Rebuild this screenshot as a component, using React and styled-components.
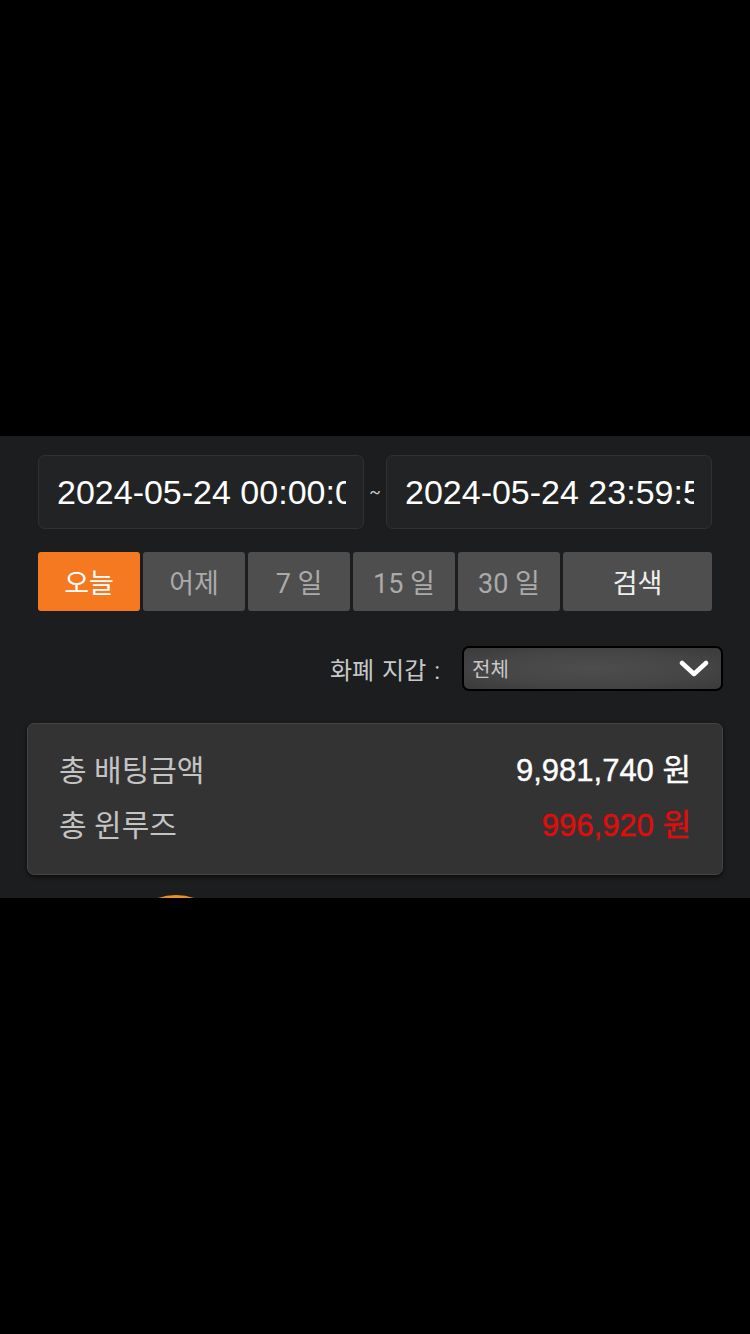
import React from 'react';
import styled, {createGlobalStyle} from 'styled-components';

const GlobalStyle = createGlobalStyle`
  html, body {
    margin: 0;
    padding: 0;
    background: #000;
  }
  body {
    font-family: Roboto, "Noto Sans CJK KR", sans-serif;
  }
`

const Page = styled.div`
  width: 750px;
  min-height: 1334px;
  background: #000;
  padding-top: 436px;
  box-sizing: border-box;
`
const Panel = styled.section`
  height: 462px;
  background: #1b1d1f;
  padding: 19px 27px 0;
  box-sizing: border-box;
  overflow: hidden;
`
const DateRow = styled.div`
  display: flex;
  align-items: center;
  margin: 0 11px;
`
const DateInput = styled.input`
  width: 326px;
  height: 74px;
  box-sizing: border-box;
  background: #222324;
  border: 1px solid #303132;
  border-radius: 7px;
  color: #fff;
  font-family: "Liberation Sans", "Noto Sans CJK KR", sans-serif;
  font-size: 34px;
  padding: 0 17px 0 18px;
  outline: none;
`
const Tilde = styled.span`
  width: 22px;
  text-align: center;
  color: #ccc;
  font-size: 17px;
`
const ButtonRow = styled.div`
  display: flex;
  gap: 3px;
  margin: 23px 11px 0;
`
const RangeButton = styled.button`
  width: ${p => (p.$wide ? '149px' : '102px')};
  height: 59px;
  border: none;
  border-radius: 3px;
  background: ${p => (p.$active ? '#f47920' : '#4e4e4f')};
  color: ${p => (p.$active ? '#fff' : p.$wide ? '#eee' : '#aaa')};
  font-family: Roboto, "Noto Sans CJK KR", sans-serif;
  font-size: 27px;
  padding: 0;
`
const WalletRow = styled.div`
  display: flex;
  justify-content: flex-end;
  align-items: center;
  margin-top: 35px;
  gap: 22px;
`
const WalletLabel = styled.span`
  color: #c8c8c8;
  font-size: 24px;
  word-spacing: 2px;
`
const Select = styled.div`
  width: 261px;
  height: 45px;
  box-sizing: border-box;
  border: 2px solid #000;
  border-radius: 7px;
  background: radial-gradient(ellipse at center, #4d4d4d 0%, #454545 60%, #3a3a3a 100%);
  display: flex;
  align-items: center;
  justify-content: space-between;
  padding: 0 12px 0 8px;
`
const SelectText = styled.span`
  color: #c8c8c8;
  font-size: 20px;
`
const Card = styled.div`
  margin-top: 32px;
  height: 152px;
  box-sizing: border-box;
  background: #333334;
  border: 1px solid #444;
  border-radius: 7px;
  box-shadow: 0 2px 4px rgba(0, 0, 0, 0.6);
  padding: 16px 31px 0;
`
const SumRow = styled.div`
  display: flex;
  justify-content: space-between;
  align-items: center;
  height: 55px;
`
const SumLabel = styled.span`
  color: #c4c4c4;
  font-size: 30px;
`
const SumValue = styled.span`
  color: ${p => p.$color || '#fff'};
  font-family: "Liberation Sans", "Noto Sans CJK KR", sans-serif;
  font-size: 31px;
  font-weight: 400;
  -webkit-text-stroke: 0.4px ${p => p.$color || '#fff'};
`
const Spinner = styled.div`
  width: 110px;
  height: 110px;
  border-radius: 50%;
  background: #ee8f2a;
  margin: 20px 0 0 94px;
`

const ranges = ['오늘', '어제', '7 일', '15 일', '30 일'];

export default function App() {
  return (
    <Page>
      <GlobalStyle/>
      <Panel>
        <DateRow>
          <DateInput readOnly value="2024-05-24 00:00:00"/>
          <Tilde>~</Tilde>
          <DateInput readOnly value="2024-05-24 23:59:59"/>
        </DateRow>
        <ButtonRow>
          {ranges.map((r, i) => (
            <RangeButton key={r} $active={i === 0}>{r}</RangeButton>
          ))}
          <RangeButton $wide>검색</RangeButton>
        </ButtonRow>
        <WalletRow>
          <WalletLabel>화폐 지갑 :</WalletLabel>
          <Select>
            <SelectText>전체</SelectText>
            <svg width="30" height="18" viewBox="0 0 30 18">
              <path d="M3 3 L15 14 L27 3" fill="none" stroke="#fff" strokeWidth="4.5" strokeLinecap="round" strokeLinejoin="round"/>
            </svg>
          </Select>
        </WalletRow>
        <Card>
          <SumRow>
            <SumLabel>총 배팅금액</SumLabel>
            <SumValue>9,981,740 원</SumValue>
          </SumRow>
          <SumRow>
            <SumLabel>총 윈루즈</SumLabel>
            <SumValue $color="#e40b0b">996,920 원</SumValue>
          </SumRow>
        </Card>
        <Spinner/>
      </Panel>
    </Page>
  );
}
